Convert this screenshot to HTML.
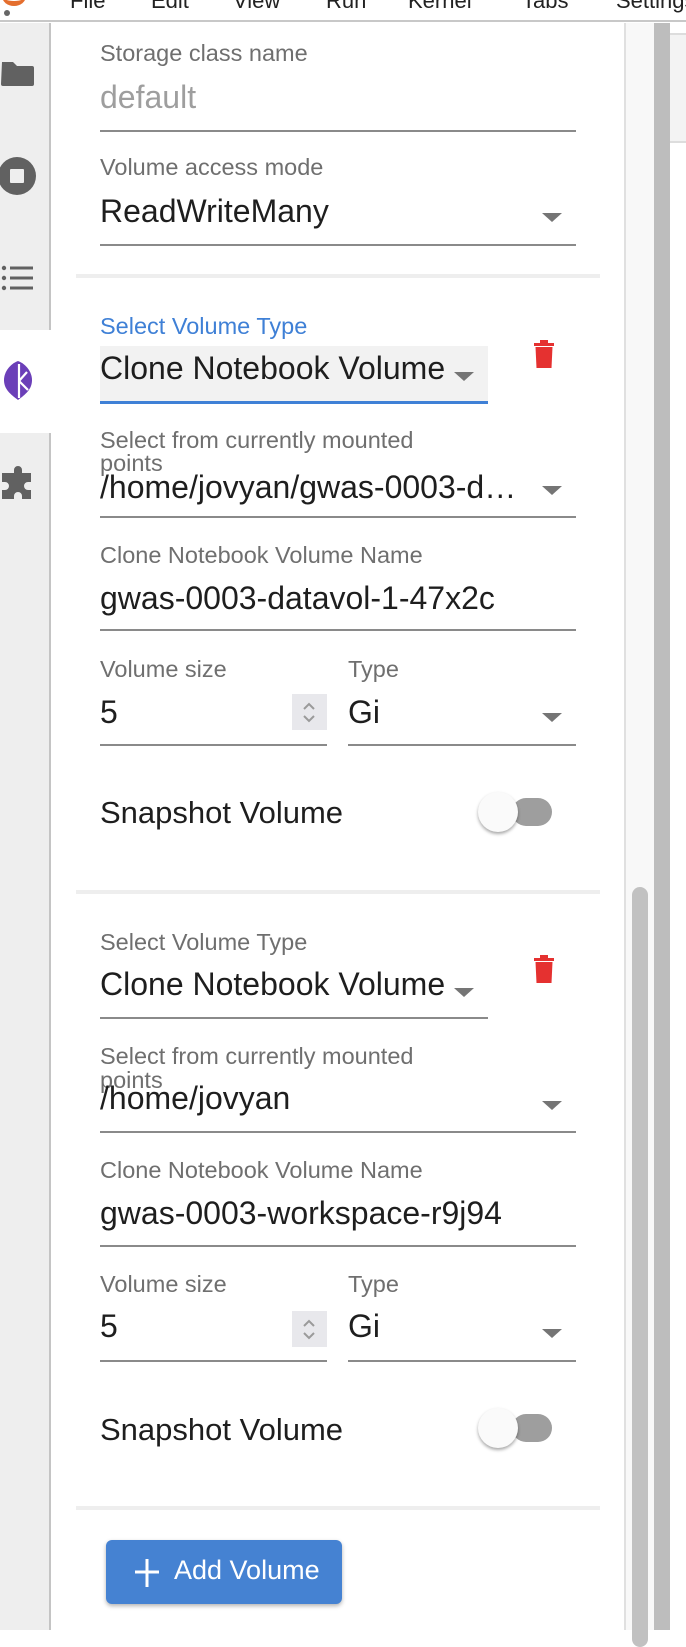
<!DOCTYPE html>
<html><head><style>
*{margin:0;padding:0;box-sizing:border-box}
body{width:686px;height:1630px;position:relative;overflow:hidden;background:#fff;font-family:"Liberation Sans",sans-serif}
.a{position:absolute}
.lbl{position:absolute;font-size:23.5px;line-height:1;color:#6f6f6f;white-space:nowrap}
.val{position:absolute;font-size:32px;line-height:1;color:#1e1e1e;white-space:nowrap}
.ul{position:absolute;height:2px;background:#8a8a8a}
.arr{position:absolute;width:0;height:0;border-left:10px solid transparent;border-right:10px solid transparent;border-top:9px solid #757575}
.div{position:absolute;left:76px;width:524px;height:4px;background:#eee}
.tog{position:absolute;width:40px;height:28px;border-radius:14px;background:#9e9e9e}
.knob{position:absolute;width:40px;height:40px;border-radius:50%;background:#fafafa;box-shadow:0 2px 3px rgba(0,0,0,.35)}
.spin{position:absolute;width:35px;height:36px;background:#e8e8ec}
</style></head><body>
<!-- menu -->
<div class="a" style="left:0;top:0;width:686px;height:22px;background:#fff;border-bottom:2px solid #c8c8c8;overflow:hidden">
<div class="a" style="left:2px;top:-14px;width:24px;height:20px;border-bottom:5px solid #e46e2e;border-radius:50%"></div>
<div class="a" style="left:4px;top:10px;width:6px;height:6px;border-radius:50%;background:#666"></div>
<div class="a" style="left:70px;top:-12px;font-size:22px;color:#222;white-space:nowrap">
<span class="a" style="left:0">File</span><span class="a" style="left:81px">Edit</span><span class="a" style="left:163px">View</span><span class="a" style="left:256px">Run</span><span class="a" style="left:338px">Kernel</span><span class="a" style="left:452px">Tabs</span><span class="a" style="left:546px">Settings</span></div>
</div>
<!-- sidebar -->
<div class="a" style="left:0;top:23px;width:51px;height:1607px;background:#eee;border-right:2px solid #c4c4c4"></div>
<div class="a" style="left:0;top:330px;width:51px;height:103px;background:#fff"></div>
<svg class="a" style="left:0;top:55px" width="51" height="480" viewBox="0 55 51 480">
<path d="M2 62h11l4 4h15a2 2 0 0 1 2 2v16a2 2 0 0 1-2 2H3a2 2 0 0 1-2-2z" fill="#616161"/>
<circle cx="17" cy="176" r="19" fill="#616161"/><rect x="10" y="169" width="14" height="14" rx="1" fill="#eee"/>
<circle cx="4" cy="268" r="2.2" fill="#616161"/><circle cx="4" cy="278" r="2.2" fill="#616161"/><circle cx="4" cy="288" r="2.2" fill="#616161"/>
<rect x="10" y="266.5" width="23" height="3" fill="#616161"/><rect x="10" y="276.5" width="23" height="3" fill="#616161"/><rect x="10" y="286.5" width="23" height="3" fill="#616161"/>
<path d="M18 361c-8 3-14 11-14 19 0 9 6 14 14 20 8-6 14-11 14-20 0-8-6-16-14-19z" fill="#6b3fb8"/>
<path d="M19 364v34M19 381l8-9M19 381l9 9" stroke="#fff" stroke-width="2.2" fill="none"/>
<path d="M14 470a4 4 0 0 1 8 0v3h9v9h-3a4 4 0 0 0 0 8h3v9h-9v-3a4 4 0 0 0-8 0v3H2v-9h3a4 4 0 0 0 0-8H2v-9h12z" fill="#616161"/>
</svg>
<!-- right area -->
<div class="a" style="left:624px;top:23px;width:2px;height:1607px;background:#e0e0e0"></div>
<div class="a" style="left:626px;top:23px;width:28px;height:1607px;background:#f8f8f8"></div>
<div class="a" style="left:632px;top:887px;width:16px;height:760px;border-radius:8px;background:#c1c1c1"></div>
<div class="a" style="left:654px;top:23px;width:16px;height:1607px;background:#bdbdbd"></div>
<div class="a" style="left:670px;top:23px;width:16px;height:1607px;background:#fff"></div>
<div class="a" style="left:670px;top:33px;width:16px;height:110px;background:#f3f3f3;border-top:2px solid #ddd;border-bottom:2px solid #ddd"></div>

<!-- block 1 top -->
<div class="lbl" style="left:100px;top:42px">Storage class name</div>
<div class="val" style="left:100px;top:81px;color:#9e9e9e">default</div>
<div class="ul" style="left:100px;top:130px;width:476px"></div>
<div class="lbl" style="left:100px;top:156px">Volume access mode</div>
<div class="val" style="left:100px;top:195px">ReadWriteMany</div>
<div class="arr" style="left:542px;top:213px"></div>
<div class="ul" style="left:100px;top:244px;width:476px"></div>
<div class="div" style="top:274px"></div>

<!-- block 2 -->
<div class="lbl" style="left:100px;top:315px;color:#3f80d6">Select Volume Type</div>
<div class="a" style="left:100px;top:346px;width:388px;height:55px;background:#f2f2f2"></div>
<div class="val" style="left:100px;top:352px">Clone Notebook Volume</div>
<div class="arr" style="left:454px;top:372px"></div>
<div class="a" style="left:100px;top:401px;width:388px;height:3px;background:#3f80d6"></div>
<svg class="a" style="left:532px;top:340px" width="24" height="30" viewBox="0 0 24 30"><rect x="2" y="3" width="20" height="3" fill="#e53130"/><rect x="8" y="0" width="8" height="4" fill="#e53130"/><path d="M3.5 7h17l-1 21h-15z" fill="#e53130"/></svg>
<div class="lbl" style="left:100px;top:429px">Select from currently mounted</div>
<div class="lbl" style="left:100px;top:452px">points</div>
<div class="val" style="left:100px;top:471px">/home/jovyan/gwas-0003-d…</div>
<div class="arr" style="left:542px;top:486px"></div>
<div class="ul" style="left:100px;top:516px;width:476px"></div>
<div class="lbl" style="left:100px;top:544px">Clone Notebook Volume Name</div>
<div class="val" style="left:100px;top:582px">gwas-0003-datavol-1-47x2c</div>
<div class="ul" style="left:100px;top:629px;width:476px"></div>
<div class="lbl" style="left:100px;top:658px">Volume size</div>
<div class="val" style="left:100px;top:696px">5</div>
<div class="spin" style="left:292px;top:694px"></div>
<svg class="a" style="left:292px;top:694px" width="35" height="36"><path d="M12 15l5-5 5 5M12 22l5 5 5-5" stroke="#9a9a9a" stroke-width="2" fill="none"/></svg>
<div class="ul" style="left:100px;top:744px;width:227px"></div>
<div class="lbl" style="left:348px;top:658px">Type</div>
<div class="val" style="left:348px;top:696px">Gi</div>
<div class="arr" style="left:542px;top:713px"></div>
<div class="ul" style="left:348px;top:744px;width:228px"></div>
<div class="val" style="left:100px;top:797px;font-size:31px">Snapshot Volume</div>
<div class="tog" style="left:512px;top:798px"></div>
<div class="knob" style="left:478px;top:792px"></div>
<div class="div" style="top:890px"></div>

<!-- block 3 -->
<div class="lbl" style="left:100px;top:931px">Select Volume Type</div>
<div class="val" style="left:100px;top:968px">Clone Notebook Volume</div>
<div class="arr" style="left:454px;top:988px"></div>
<div class="ul" style="left:100px;top:1017px;width:388px"></div>
<svg class="a" style="left:532px;top:955px" width="24" height="30" viewBox="0 0 24 30"><rect x="2" y="3" width="20" height="3" fill="#e53130"/><rect x="8" y="0" width="8" height="4" fill="#e53130"/><path d="M3.5 7h17l-1 21h-15z" fill="#e53130"/></svg>
<div class="lbl" style="left:100px;top:1045px">Select from currently mounted</div>
<div class="lbl" style="left:100px;top:1069px">points</div>
<div class="val" style="left:100px;top:1082px">/home/jovyan</div>
<div class="arr" style="left:542px;top:1101px"></div>
<div class="ul" style="left:100px;top:1131px;width:476px"></div>
<div class="lbl" style="left:100px;top:1159px">Clone Notebook Volume Name</div>
<div class="val" style="left:100px;top:1197px">gwas-0003-workspace-r9j94</div>
<div class="ul" style="left:100px;top:1245px;width:476px"></div>
<div class="lbl" style="left:100px;top:1273px">Volume size</div>
<div class="val" style="left:100px;top:1310px">5</div>
<div class="spin" style="left:292px;top:1311px"></div>
<svg class="a" style="left:292px;top:1311px" width="35" height="36"><path d="M12 15l5-5 5 5M12 22l5 5 5-5" stroke="#9a9a9a" stroke-width="2" fill="none"/></svg>
<div class="ul" style="left:100px;top:1360px;width:227px"></div>
<div class="lbl" style="left:348px;top:1273px">Type</div>
<div class="val" style="left:348px;top:1310px">Gi</div>
<div class="arr" style="left:542px;top:1329px"></div>
<div class="ul" style="left:348px;top:1360px;width:228px"></div>
<div class="val" style="left:100px;top:1414px;font-size:31px">Snapshot Volume</div>
<div class="tog" style="left:512px;top:1414px"></div>
<div class="knob" style="left:478px;top:1408px"></div>
<div class="div" style="top:1506px"></div>

<div class="a" style="left:106px;top:1540px;width:236px;height:64px;background:#4582d2;border-radius:6px;box-shadow:0 2px 4px rgba(0,0,0,.3);color:#fff;font-size:27px;line-height:1">
<svg class="a" style="left:29px;top:17px" width="24" height="30"><path d="M12 2v28M0 15h24" stroke="#fff" stroke-width="3"/></svg>
<span class="a" style="left:68px;top:17px">Add Volume</span></div>
</body></html>
